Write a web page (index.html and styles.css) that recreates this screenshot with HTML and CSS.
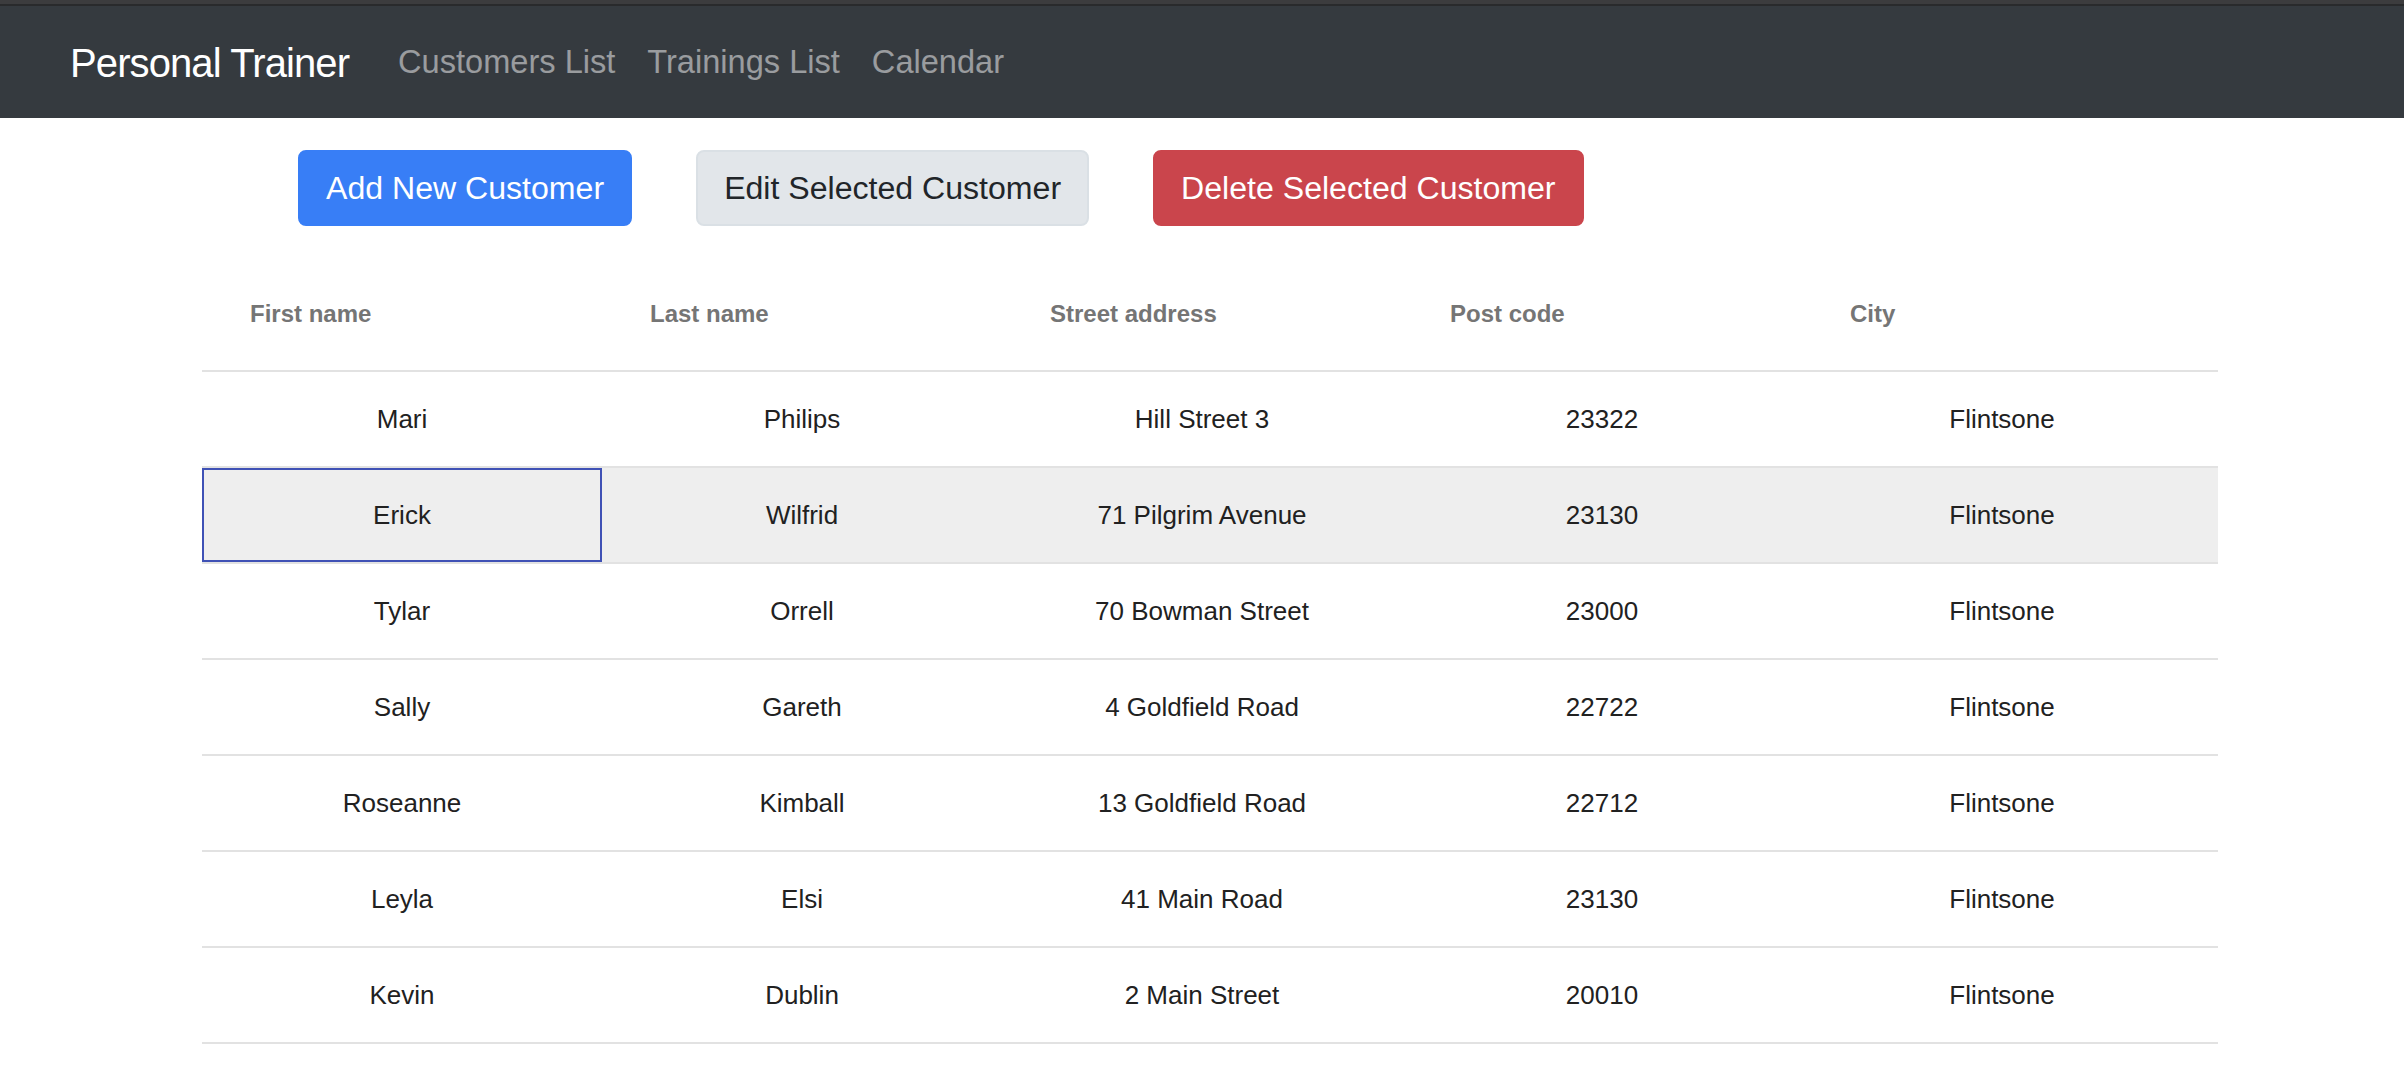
FILE: index.html
```html
<!DOCTYPE html>
<html lang="en">
<head>
<meta charset="utf-8">
<title>Personal Trainer</title>
<link rel="stylesheet" href="styles.css">
</head>
<body>
<div class="chrome"></div>
<nav class="navbar">
  <span class="brand">Personal Trainer</span>
  <a class="nav-link">Customers List</a>
  <a class="nav-link">Trainings List</a>
  <a class="nav-link">Calendar</a>
</nav>
<div class="actions">
  <button class="btn btn-primary">Add New Customer</button>
  <button class="btn btn-light">Edit Selected Customer</button>
  <button class="btn btn-danger">Delete Selected Customer</button>
</div>
<div class="grid">
  <div class="row header">
    <div class="hcell">First name</div>
    <div class="hcell">Last name</div>
    <div class="hcell">Street address</div>
    <div class="hcell">Post code</div>
    <div class="hcell">City</div>
    <div class="filler"></div>
  </div>
  <div class="row">
    <div class="cell">Mari</div><div class="cell">Philips</div><div class="cell">Hill Street 3</div><div class="cell">23322</div><div class="cell">Flintsone</div><div class="filler"></div>
  </div>
  <div class="row selected">
    <div class="cell focused">Erick</div><div class="cell">Wilfrid</div><div class="cell">71 Pilgrim Avenue</div><div class="cell">23130</div><div class="cell">Flintsone</div><div class="filler"></div>
  </div>
  <div class="row">
    <div class="cell">Tylar</div><div class="cell">Orrell</div><div class="cell">70 Bowman Street</div><div class="cell">23000</div><div class="cell">Flintsone</div><div class="filler"></div>
  </div>
  <div class="row">
    <div class="cell">Sally</div><div class="cell">Gareth</div><div class="cell">4 Goldfield Road</div><div class="cell">22722</div><div class="cell">Flintsone</div><div class="filler"></div>
  </div>
  <div class="row">
    <div class="cell">Roseanne</div><div class="cell">Kimball</div><div class="cell">13 Goldfield Road</div><div class="cell">22712</div><div class="cell">Flintsone</div><div class="filler"></div>
  </div>
  <div class="row">
    <div class="cell">Leyla</div><div class="cell">Elsi</div><div class="cell">41 Main Road</div><div class="cell">23130</div><div class="cell">Flintsone</div><div class="filler"></div>
  </div>
  <div class="row">
    <div class="cell">Kevin</div><div class="cell">Dublin</div><div class="cell">2 Main Street</div><div class="cell">20010</div><div class="cell">Flintsone</div><div class="filler"></div>
  </div>
</div>
</body>
</html>
```
FILE: styles.css
```css
* { box-sizing: border-box; }

html, body {
  margin: 0;
  padding: 0;
  background: #ffffff;
  font-family: "Liberation Sans", Arial, sans-serif;
  overflow: hidden;
}

.chrome {
  height: 6px;
  background: #3c3c3e;
  border-bottom: 2px solid #292a2c;
}

.navbar {
  height: 112px;
  background: #353a3f;
  display: flex;
  align-items: center;
  padding-left: 70px;
}

.brand {
  color: #ffffff;
  font-size: 40px;
  line-height: 60px;
  letter-spacing: -0.9px;
  margin-right: 33px;
  padding-top: 2px;
}

.nav-link {
  color: rgba(255, 255, 255, 0.5);
  font-size: 32.6px;
  line-height: 48px;
  padding: 0 16px;
}

.actions {
  display: flex;
  gap: 64px;
  padding-left: 298px;
  margin-top: 32px;
  margin-bottom: 32px;
}

.btn {
  font-family: "Liberation Sans", Arial, sans-serif;
  font-size: 32.1px;
  line-height: 48px;
  padding: 12px 26px;
  border: 2px solid transparent;
  border-radius: 8px;
  cursor: pointer;
}

.btn-primary {
  background: #387ef6;
  border-color: #387ef6;
  color: #ffffff;
}

.btn-light {
  background: #e2e6ea;
  border-color: #dae0e5;
  color: #212529;
}

.btn-danger {
  background: #ca454c;
  border-color: #ca454c;
  color: #ffffff;
}

.grid {
  margin-left: 202px;
  width: 2016px;
}

.row {
  display: grid;
  grid-template-columns: repeat(5, 400px) 16px;
  height: 96px;
  border-bottom: 2px solid #e2e2e2;
}

.row.header {
  height: 114px;
}

.row.selected {
  background: #eeeeee;
}

.hcell {
  display: flex;
  align-items: center;
  padding-left: 48px;
  font-size: 24px;
  font-weight: bold;
  color: #757575;
}

.cell {
  display: flex;
  align-items: center;
  justify-content: center;
  font-size: 26px;
  color: #212121;
}

.cell.focused {
  outline: 2px solid #3f51b5;
  outline-offset: -2px;
}
```
